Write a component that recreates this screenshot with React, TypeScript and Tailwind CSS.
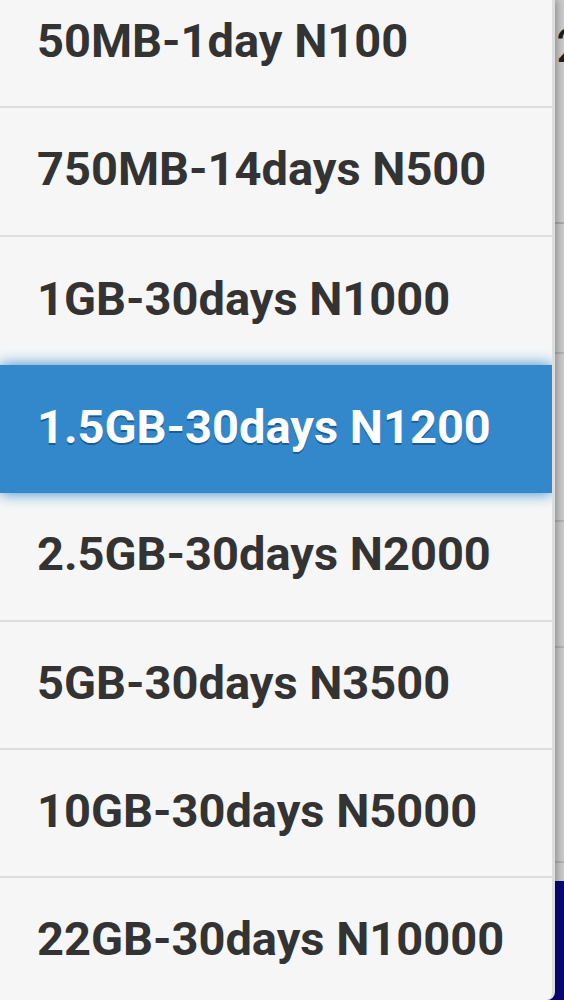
import React from 'react';

const plans = [
  '50MB-1day N100',
  '750MB-14days N500',
  '1GB-30days N1000',
  '1.5GB-30days N1200',
  '2.5GB-30days N2000',
  '5GB-30days N3500',
  '10GB-30days N5000',
  '22GB-30days N10000',
];

const selected = 3;

const App = () => {
  return (
    <div
      className="relative h-[1000px] w-[564px] overflow-hidden bg-[#cbcbcb]"
      style={{ fontFamily: 'Roboto, "Liberation Sans", sans-serif' }}
    >
      {/* page behind the open select, dimmed */}
      <div className="flex h-full flex-col">
        <div className="h-[222px] pl-[556px] pt-[14px] text-[48px] leading-[64px] text-[#1e1e1e]">2</div>
        <div className="h-[2px] bg-[#ababab]" />
        <div className="h-[128px]" />
        <div className="h-[2px] bg-[#b3b3b3]" />
        <div className="h-[166px]" />
        <div className="h-[2px] bg-[#b3b3b3]" />
        <div className="h-[124px]" />
        <div className="h-[2px] bg-[#b3b3b3]" />
        <div className="h-[213px]" />
        <div className="h-[2px] bg-[#b3b3b3]" />
        <div className="h-[18px]" />
        <div className="flex-1 bg-[#08087a]" />
      </div>

      <div className="absolute left-0 top-0 h-[1000px] w-[555px] overflow-hidden rounded-br-[8px] border-r-[3px] border-[#dedede] bg-[#f6f6f6] shadow-[3px_0_6px_rgba(0,0,0,0.25)]">
        <ul className="-mt-[20px] flex flex-col">
          {plans.map((p, i) => (
            <li
              key={p}
              className={
                i === selected
                  ? 'relative z-10 flex h-[128.33px] items-center bg-[#3388cc] pb-[4px] pl-[37px] text-[47px] font-bold text-white shadow-[0_0_14px_#3388cc] [text-shadow:0_2px_0_#1d5c94]'
                  : i === selected - 1
                    ? 'flex h-[128.33px] items-center pb-[4px] pl-[37px] text-[47px] font-bold text-[#333]'
                    : 'flex h-[128.33px] items-center border-b-2 border-[#dedede] pb-[4px] pl-[37px] text-[47px] font-bold text-[#333]'
              }
            >
              {p}
            </li>
          ))}
        </ul>
      </div>
    </div>
  );
};

export default App;
